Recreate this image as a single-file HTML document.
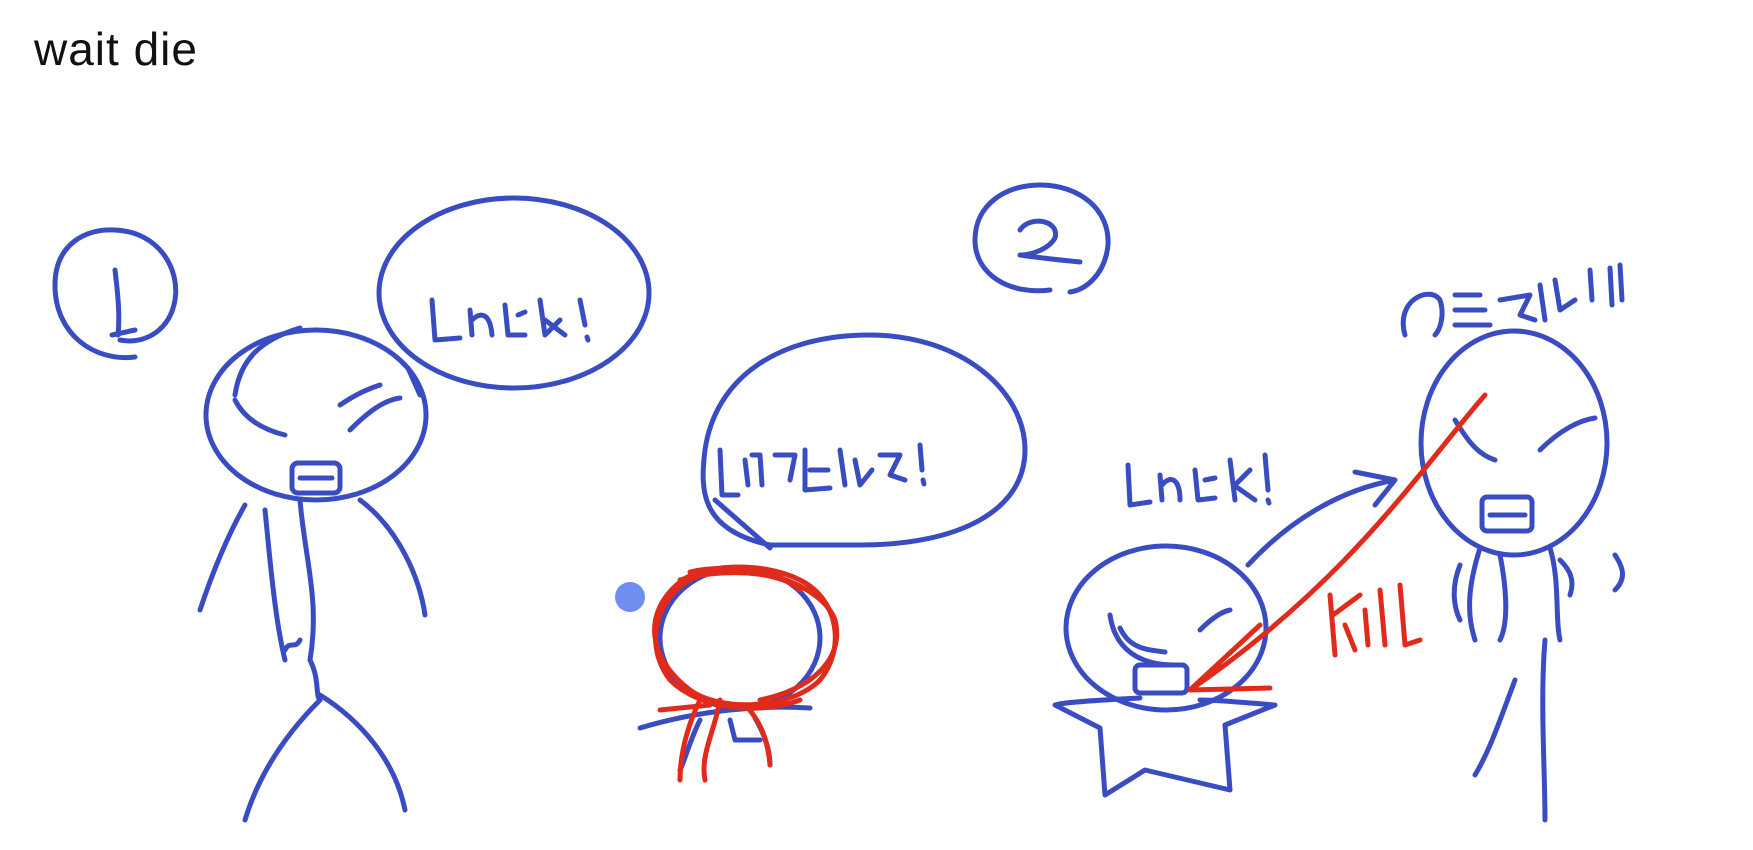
<!DOCTYPE html>
<html><head><meta charset="utf-8"><style>
html,body{margin:0;padding:0;background:#fff;width:1753px;height:850px;overflow:hidden}
.t{position:absolute;left:34px;top:22px;font-family:"Liberation Sans",sans-serif;font-size:46px;color:#111;letter-spacing:1px}
svg{position:absolute;left:0;top:0}
.b{fill:none;stroke:#3a4cc2;stroke-width:5;stroke-linecap:round;stroke-linejoin:round}
.r{fill:none;stroke:#e02a1c;stroke-width:5;stroke-linecap:round;stroke-linejoin:round}
</style></head><body>
<div class="t">wait die</div>
<svg width="1753" height="850" viewBox="0 0 1753 850">
<g class="b">
<path d="M135 357 C95 362 55 335 55 285 C55 245 85 228 115 230 C160 232 180 270 175 300 C170 330 145 345 120 340"/>
<path d="M115 270 C118 295 120 315 118 335 M112 335 L135 330"/>
<ellipse cx="316" cy="415" rx="110" ry="85"/>
<path d="M235 395 C240 360 260 340 300 328"/>
<path d="M235 400 C245 420 265 430 285 435 M350 430 C370 410 385 400 400 398 M340 405 C355 395 365 390 380 385"/>
<rect x="292" y="463" width="48" height="30" rx="6"/>
<path d="M300 478 L332 478"/>
<ellipse cx="514" cy="293" rx="135" ry="95"/>
<path d="M408 368 L420 395"/>
<path d="M432 300 L435 340 L460 338 M470 310 L472 335 M472 320 C480 312 490 312 492 335 M505 305 L508 335 L525 335 M518 315 L525 312 M540 300 L545 335 L560 320 M545 320 L565 335 M580 300 L585 325 M587 337 L588 340"/>
<path d="M245 505 C225 540 210 580 200 610 M360 500 C400 530 420 580 425 615"/>
<path d="M265 510 C270 560 275 620 285 660 M300 500 C305 560 320 600 310 660 M285 650 C290 640 295 650 300 640"/>
<path d="M310 660 C320 680 315 695 320 700 M320 700 C290 730 260 770 245 820 M320 695 C360 720 395 760 405 810"/>
<path d="M1050 290 C1010 295 975 275 975 240 C975 205 1005 185 1040 185 C1080 185 1110 210 1108 245 C1105 275 1085 290 1070 292"/>
<path d="M1020 230 C1030 215 1060 220 1055 238 C1048 250 1030 255 1020 255 C1040 258 1060 260 1080 262"/>
<path d="M770 545 C700 530 700 490 705 450 C715 380 775 335 870 335 C960 335 1025 390 1025 450 C1025 510 960 545 860 545 C820 545 790 545 770 545 Z" />
<path d="M715 500 L770 548"/>
<path d="M720 450 L722 495 L738 495 M745 460 L748 485 M752 455 L760 455 L762 485 M775 455 L795 455 L790 480 M805 450 L805 490 L830 488 M810 470 L828 470 M840 450 L845 485 M855 460 L860 485 L872 470 M880 455 L900 455 L890 475 L905 480 M920 445 L922 470 M923 480 L924 484"/>
<ellipse cx="740" cy="638" rx="80" ry="70"/>
<path d="M640 728 C700 710 760 705 810 708"/>
<path d="M700 720 C690 740 685 760 680 770 M755 718 C765 735 770 750 770 765 M730 720 L735 740 L760 740"/>
<ellipse cx="1166" cy="628" rx="100" ry="82"/>
<path d="M1120 628 C1130 650 1150 650 1165 652"/>
<path d="M1200 630 C1210 620 1220 612 1230 610"/>
<path d="M1110 615 C1115 650 1140 665 1175 665"/>
<rect x="1135" y="665" width="52" height="28" rx="5"/>
<path d="M1140 698 C1100 700 1065 702 1055 705 L1100 728 L1105 795 L1145 770 L1230 790 L1225 725 L1275 705 C1240 702 1215 700 1200 700"/>
<path d="M1128 465 L1130 505 L1150 502 M1160 475 L1162 500 M1162 485 C1170 475 1180 478 1180 500 M1195 470 L1198 500 L1215 498 M1205 480 L1215 478 M1230 460 L1235 500 M1235 485 L1250 470 M1238 488 L1255 500 M1265 455 L1268 490 M1268 500 L1269 503"/>
<path d="M1248 565 C1290 520 1340 490 1395 480 M1355 472 L1395 480 L1375 505"/>
<ellipse cx="1514" cy="443" rx="93" ry="112"/>
<path d="M1455 420 C1470 445 1480 455 1495 460 M1540 450 C1560 430 1580 420 1595 418"/>
<rect x="1482" y="497" width="50" height="34" rx="5"/>
<path d="M1490 515 L1525 515"/>
<path d="M1480 548 C1470 580 1465 610 1475 640 M1500 555 C1505 580 1510 620 1500 640 M1550 548 C1560 580 1555 620 1560 640 M1560 560 C1570 570 1575 580 1570 595 M1460 565 C1450 590 1455 610 1460 620 M1615 555 C1625 570 1625 580 1615 590"/>
<path d="M1545 640 C1540 700 1545 770 1545 820 M1515 680 C1500 720 1490 750 1475 775"/>
<path d="M1405 335 C1395 300 1430 285 1440 300 C1445 315 1440 330 1435 335 M1455 295 L1480 295 M1455 310 L1485 310 M1455 325 L1490 325 M1500 300 L1530 295 L1520 315 L1535 320 M1540 285 L1545 320 M1555 280 L1560 310 L1575 300 M1590 270 L1592 300 M1610 268 L1612 305 M1620 265 L1622 300"/>
</g>
<g class="r">
<path d="M680 582 C700 565 760 560 800 580 C840 600 845 650 820 680 C790 710 720 712 690 690 C650 660 640 615 680 582 Z"/>
<path d="M700 575 C660 590 640 640 670 680 C700 710 760 715 800 700 M690 572 C740 560 820 580 835 620 C845 660 810 690 760 700"/>
<path d="M680 580 C720 568 780 570 800 590 M700 700 C690 720 680 750 680 780 M720 700 C715 730 700 755 705 780 M745 705 C760 720 768 740 770 765 M660 710 L710 705"/>
<path d="M1485 395 C1420 470 1350 580 1190 690 M1190 690 L1270 688 M1190 690 L1260 625"/>
<path d="M1330 595 L1335 655 M1333 615 L1360 595 M1345 625 L1355 650 M1365 610 L1368 645 M1380 590 L1385 645 M1400 585 L1405 645 L1420 640"/>
</g>
<circle cx="630" cy="597" r="15" fill="#6f8ef0"/>
</svg>
</body></html>
